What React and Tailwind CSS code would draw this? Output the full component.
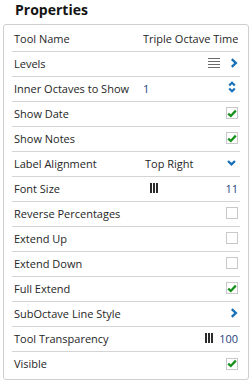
const Bars = () => (
  <svg width="8" height="10" viewBox="0 0 8 10" className="block">
    <rect x="0" y="0" width="2" height="10" fill="#2b2b2b" />
    <rect x="3" y="0" width="2" height="10" fill="#2b2b2b" />
    <rect x="6" y="0" width="2" height="10" fill="#2b2b2b" />
  </svg>
);

const Menu = () => (
  <svg width="12" height="10" viewBox="0 0 12 10" className="block">
    {[0.5, 3.5, 6.5, 9.5].map((y) => (
      <line key={y} x1="0" x2="12" y1={y} y2={y} stroke="#6b6b6b" strokeWidth="1" />
    ))}
  </svg>
);

const ChevronRight = () => (
  <svg width="8" height="10" viewBox="0 0 8 10" className="block">
    <path d="M1.8 1.2 L5.8 5 L1.8 8.8" fill="none" stroke="#1770b8" strokeWidth="2.4" />
  </svg>
);

const ChevronDown = () => (
  <svg width="9" height="6" viewBox="0 0 9 6" className="block">
    <path d="M1 1 L4.5 4.4 L8 1" fill="none" stroke="#1770b8" strokeWidth="2.2" />
  </svg>
);

const UpDown = () => (
  <svg width="8" height="12" viewBox="0 0 8 12" className="block">
    <path d="M1.2 4.6 L4 1.8 L6.8 4.6" fill="none" stroke="#1770b8" strokeWidth="2.1" />
    <path d="M1.2 7.4 L4 10.2 L6.8 7.4" fill="none" stroke="#1770b8" strokeWidth="2.1" />
  </svg>
);

const Check = ({ on }) => (
  <div className="w-[12px] h-[12px] border border-[#c9c9c9] bg-white flex items-center justify-center">
    {on && (
      <svg width="10" height="9" viewBox="0 0 10 9" className="block">
        <path d="M1.2 4.6 L3.8 7 L8.8 1.6" fill="none" stroke="#15921a" strokeWidth="2.3" />
      </svg>
    )}
  </div>
);

const Row = ({ label, children, first, last }) => (
  <div
    className={`flex items-center pl-[2px] pr-[2px] ${last ? '' : 'border-b border-[#d4d4d4]'} ${first ? 'h-[27px] pt-[1px]' : 'h-[25px] pb-[2px]'}`}
  >
    <div className="w-[129px] shrink-0 whitespace-nowrap">{label}</div>
    <div className="flex-1 flex items-center min-w-0">{children}</div>
  </div>
);

export default function App() {
  return (
    <div className="w-[251px] h-[382px] bg-white font-['Open_Sans',sans-serif] text-[11px] leading-[15px] text-[#262626]">
      <h1 className="pl-[15px] text-[14px] font-bold leading-[19px] text-[#141414]">Properties</h1>
      <div className="ml-[3px] mr-[2px] mt-[5px] border border-[#cfcfcf] rounded-[3px] px-[8px] pb-[2px]">
        <Row label="Tool Name" first>
          <span className="whitespace-nowrap overflow-hidden">Triple Octave Time</span>
        </Row>
        <Row label="Levels">
          <div className="ml-auto flex items-center gap-[10px]">
            <Menu />
            <ChevronRight />
          </div>
        </Row>
        <Row label="Inner Octaves to Show">
          <span className="text-[#1e3f7f]">1</span>
          <div className="ml-auto mr-[2px] mb-[2px]">
            <UpDown />
          </div>
        </Row>
        <Row label="Show Date">
          <div className="ml-auto"><Check on /></div>
        </Row>
        <Row label="Show Notes">
          <div className="ml-auto"><Check on /></div>
        </Row>
        <Row label="Label Alignment">
          <span className="ml-[2px]">Top Right</span>
          <div className="ml-auto mr-[2px]">
            <ChevronDown />
          </div>
        </Row>
        <Row label="Font Size">
          <div className="ml-[7px]"><Bars /></div>
          <span className="ml-auto text-[#1e3f7f]">11</span>
        </Row>
        <Row label="Reverse Percentages">
          <div className="ml-auto"><Check /></div>
        </Row>
        <Row label="Extend Up">
          <div className="ml-auto"><Check /></div>
        </Row>
        <Row label="Extend Down">
          <div className="ml-auto"><Check /></div>
        </Row>
        <Row label="Full Extend">
          <div className="ml-auto"><Check on /></div>
        </Row>
        <Row label="SubOctave Line Style">
          <div className="ml-auto">
            <ChevronRight />
          </div>
        </Row>
        <Row label="Tool Transparency">
          <div className="ml-auto flex items-center gap-[6px]">
            <Bars />
            <span className="text-[#1e3f7f]">100</span>
          </div>
        </Row>
        <Row label="Visible" last>
          <div className="ml-auto"><Check on /></div>
        </Row>
      </div>
    </div>
  );
}
